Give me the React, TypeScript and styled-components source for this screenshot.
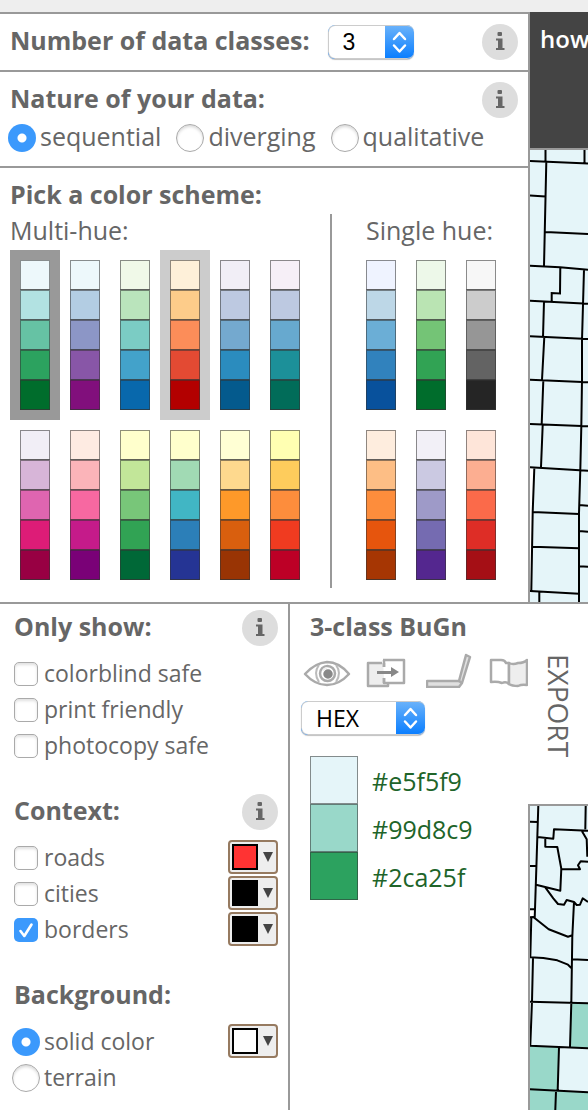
import React, { useState } from "react";
import styled, { createGlobalStyle } from "styled-components";

const GlobalStyle = createGlobalStyle`
  *, *::before, *::after { box-sizing: border-box; }
  body {
    margin: 0;
    background: #fff;
    color: #666;
    font-family: "Open Sans", "Noto Sans", sans-serif;
    font-size: 25px;
    line-height: 32px;
  }
  button, select, input { font: inherit; color: inherit; margin: 0; }
`;

const RULE = "2px solid #999";

const Page = styled.div`
  display: flex;
  flex-direction: column;
  min-height: 100vh;
  overflow: hidden;
`;

const TopStrip = styled.header`
  height: 12px;
  background: #eee;
`;

const Upper = styled.div`
  display: grid;
  grid-template-columns: 528px minmax(0, 1fr);
`;

const Setup = styled.main`
  display: flex;
  flex-direction: column;
`;

const SetupRow = styled.section<{ $bottom: number }>`
  border-top: ${RULE};
  padding: 10px 10px ${(p) => p.$bottom}px;
`;

const TitleBar = styled.div<{ $indent?: number }>`
  display: flex;
  align-items: flex-start;
  min-height: 36px;
  padding-left: ${(p) => p.$indent ?? 0}px;
`;

const Title = styled.h2`
  margin: 0;
  font-size: 25px;
  font-weight: 700;
  line-height: 32px;
  white-space: nowrap;
`;

const InfoButton = styled.button`
  width: 36px;
  height: 36px;
  margin-left: auto;
  padding: 0;
  border: 0;
  border-radius: 50%;
  background: #ddd;
  flex: none;
  svg { display: block; }
`;

const SelectBox = styled.div<{ $width: number }>`
  display: grid;
  grid-template-columns: minmax(0, 1fr) 29px;
  width: ${(p) => p.$width}px;
  height: 34px;
  border-radius: 7px;
  overflow: hidden;
  background: linear-gradient(#6cb3fa, #087dff);
  box-shadow: 0 1px 1px rgba(0, 0, 0, 0.25);
  > * { grid-row: 1; }
  > svg { grid-column: 2; pointer-events: none; z-index: 1; }
`;

const Select = styled.select<{ $family?: string }>`
  grid-column: 1 / 3;
  appearance: none;
  height: 34px;
  padding: 0 0 0 14px;
  border: 1px solid #ccc;
  border-right: 0;
  border-radius: 7px;
  background: linear-gradient(#fff, #fff) 0 0 / calc(100% - 29px) 100% no-repeat;
  color: #000;
  font-family: ${(p) => p.$family ?? "inherit"};
  font-size: 23px;
  line-height: 30px;
`;

const ClassesField = styled.div`
  margin: 1px 0 0 18px;
`;

const RadioRow = styled.div`
  display: flex;
  gap: 15px;
  margin: 6px 0 0 -2px;
`;

const OptionLabel = styled.label`
  display: flex;
  align-items: flex-start;
  line-height: 24px;
  white-space: nowrap;
`;

const Radio = styled.input`
  appearance: none;
  flex: none;
  width: 28px;
  height: 28px;
  margin-right: 4px;
  border: 1px solid #aaa;
  border-radius: 50%;
  background: #fff;
  box-shadow: inset 0 2px 3px rgba(0, 0, 0, 0.15);
  &:checked {
    border: 0;
    background: radial-gradient(circle, #fff 0 4px, #3b99fc 5px);
    box-shadow: none;
  }
`;

const Checkbox = styled.input`
  appearance: none;
  flex: none;
  width: 24px;
  height: 24px;
  margin: 2px 6px 0 2px;
  border: 1px solid #aaa;
  border-radius: 5px;
  background: #fff;
  box-shadow: inset 0 2px 3px rgba(0, 0, 0, 0.12);
  &:checked {
    border: 0;
    background: #3b99fc;
    box-shadow: none;
  }
`;

const CheckWrap = styled.span`
  display: grid;
  > * { grid-area: 1 / 1; }
  > svg { margin: 2px 0 0 2px; pointer-events: none; z-index: 1; }
`;

const Schemes = styled.div`
  display: flex;
`;

const HueGroup = styled.section<{ $inset?: boolean }>`
  width: ${(p) => (p.$inset ? "auto" : "320px")};
  padding-left: ${(p) => (p.$inset ? 24 : 0)}px;
`;

const HueLabel = styled.h3<{ $indent: number }>`
  margin: 0 0 4px;
  padding-left: ${(p) => p.$indent}px;
  font-size: 25px;
  font-weight: 400;
  line-height: 32px;
`;

const Divider = styled.div`
  width: 2px;
  margin-bottom: 2px;
  background: #999;
`;

const RampGrid = styled.div<{ $columns: number }>`
  display: grid;
  grid-template-columns: repeat(${(p) => p.$columns}, 50px);
`;

const RampButton = styled.button<{ $state?: string }>`
  display: block;
  padding: 10px;
  border: 0;
  background: ${(p) =>
    p.$state === "selected" ? "#999" : p.$state === "hover" ? "#ccc" : "transparent"};
`;

const RampCell = styled.span<{ $color: string }>`
  display: block;
  width: 30px;
  height: 30px;
  background: ${(p) => p.$color};
  box-shadow: inset 0 -1px rgba(51, 51, 51, 0.5), inset 0 0 0 1px rgba(51, 51, 51, 0.55);
`;

const Side = styled.aside`
  display: flex;
  flex-direction: column;
  border-left: ${RULE};
  overflow: hidden;
`;

const HelpBar = styled.nav`
  height: 138px;
  padding: 10px;
  border-bottom: ${RULE};
  background: #444;
`;

const HelpLink = styled.a`
  color: #fff;
  font-size: 24px;
  font-weight: 600;
  line-height: 32px;
  text-decoration: none;
`;

const MapView = styled.div`
  display: flex;
  flex: 1 1 0;
  min-height: 0;
  background: #e5f5f9;
  overflow: hidden;
  svg { display: block; width: 100%; height: 100%; }
`;

const Lower = styled.div`
  display: grid;
  grid-template-columns: 290px 238px minmax(0, 1fr);
  flex: 1;
  border-top: ${RULE};
`;

const Filters = styled.div`
  display: flex;
  flex-direction: column;
  gap: 32px;
  padding: 6px 10px 16px 12px;
  border-right: ${RULE};
`;

const OptionList = styled.div`
  display: flex;
  flex-direction: column;
  gap: 2px;
  margin-top: 10px;
`;

const OptionRow = styled.div`
  display: flex;
  align-items: flex-start;
  justify-content: space-between;
  height: 34px;
  > label {
    padding-top: 4px;
    font-size: 23px;
    line-height: 26px;
  }
`;

const PickerButton = styled.button`
  display: flex;
  align-items: center;
  width: 50px;
  height: 34px;
  padding: 2px;
  border: 2px solid #967a60;
  border-radius: 4px;
  background: #eee;
`;

const PickerSwatch = styled.span<{ $color: string }>`
  width: 26px;
  height: 26px;
  margin-right: 5px;
  border: 2px solid #000;
  background: ${(p) => p.$color};
`;

const Detail = styled.section`
  padding: 6px 0 20px 11px;
  overflow: hidden;
`;

const Traits = styled.div`
  display: flex;
  margin: 2px 0 13px 2px;
  svg { display: block; flex: none; }
`;

const ColorList = styled.ul`
  margin: 21px 0 0 9px;
  padding: 0;
  list-style: none;
`;

const ColorItem = styled.li`
  display: flex;
  height: 48px;
  color: #206429;
  line-height: 50px;
`;

const ColorSwatch = styled.span<{ $color: string }>`
  width: 48px;
  height: 48px;
  margin-right: 14px;
  background: ${(p) => p.$color};
  box-shadow: inset 0 0 0 1px rgba(51, 51, 51, 0.55);
`;

const Output = styled.div`
  display: flex;
  flex-direction: column;
`;

const ExportButton = styled.button`
  display: flex;
  flex-direction: column;
  align-items: flex-start;
  justify-content: flex-end;
  height: 200px;
  padding: 50px 0 0 12px;
  border: 0;
  background: #fff;
  font-size: 28px;
  line-height: 38px;
  writing-mode: vertical-rl;
`;

const LowerMap = styled(MapView)`
  border-top: ${RULE};
  border-left: ${RULE};
`;

function Info({ topic }: { topic: string }) {
  return (
    <InfoButton type="button" aria-label={topic}>
      <svg width="36" height="36" viewBox="0 0 36 36" fill="#666">
        <rect x="15.5" y="8" width="4.5" height="4" rx="1" />
        <path d="M14 14.500H20.500V24H22.500V26H14V24H16V16.500H14Z" />
      </svg>
    </InfoButton>
  );
}

const UpDown = () => (
  <svg width="29" height="34" viewBox="0 0 29 34" fill="none" stroke="#fff" strokeWidth="2.5" strokeLinecap="round" strokeLinejoin="round">
    <path d="M9 14l5.5-6 5.5 6M9 20.5l5.5 6 5.5-6" />
  </svg>
);

function Picker({ color, name }: { color: string; name: string }) {
  return (
    <PickerButton type="button" aria-label={name}>
      <PickerSwatch $color={color} />
      <svg width="10" height="10" viewBox="0 0 10 10">
        <path d="M0 0h10L5 10z" fill="#444" />
      </svg>
    </PickerButton>
  );
}

function Check({ label, initial = false }: { label: string; initial?: boolean }) {
  const [on, setOn] = useState(initial);
  return (
    <OptionLabel>
      <CheckWrap>
        <Checkbox type="checkbox" checked={on} onChange={() => setOn(!on)} />
        {on && (
          <svg width="24" height="24" viewBox="0 0 24 24" fill="none" stroke="#fff" strokeWidth="2.6" strokeLinecap="round" strokeLinejoin="round">
            <path d="M6.5 13l3.8 5L17.500 6.500" />
          </svg>
        )}
      </CheckWrap>
      {label}
    </OptionLabel>
  );
}

const MULTI_HUE: [string, string][] = [
  ["BuGn", "#edf8fb #b2e2e2 #66c2a4 #2ca25f #006d2c"],
  ["BuPu", "#edf8fb #b3cde3 #8c96c6 #8856a7 #810f7c"],
  ["GnBu", "#f0f9e8 #bae4bc #7bccc4 #43a2ca #0868ac"],
  ["OrRd", "#fef0d9 #fdcc8a #fc8d59 #e34a33 #b30000"],
  ["PuBu", "#f1eef6 #bdc9e1 #74a9cf #2b8cbe #045a8d"],
  ["PuBuGn", "#f6eff7 #bdc9e1 #67a9cf #1c9099 #016c59"],
  ["PuRd", "#f1eef6 #d7b5d8 #df65b0 #dd1c77 #980043"],
  ["RdPu", "#feebe2 #fbb4b9 #f768a1 #c51b8a #7a0177"],
  ["YlGn", "#ffffcc #c2e699 #78c679 #31a354 #006837"],
  ["YlGnBu", "#ffffcc #a1dab4 #41b6c4 #2c7fb8 #253494"],
  ["YlOrBr", "#ffffd4 #fed98e #fe9929 #d95f0e #993404"],
  ["YlOrRd", "#ffffb2 #fecc5c #fd8d3c #f03b20 #bd0026"],
];

const SINGLE_HUE: [string, string][] = [
  ["Blues", "#eff3ff #bdd7e7 #6baed6 #3182bd #08519c"],
  ["Greens", "#edf8e9 #bae4b3 #74c476 #31a354 #006d2c"],
  ["Greys", "#f7f7f7 #cccccc #969696 #636363 #252525"],
  ["Oranges", "#feedde #fdbe85 #fd8d3c #e6550d #a63603"],
  ["Purples", "#f2f0f7 #cbc9e2 #9e9ac8 #756bb1 #54278f"],
  ["Reds", "#fee5d9 #fcae91 #fb6a4a #de2d26 #a50f15"],
];

const STATES: Record<string, string> = { BuGn: "selected", OrRd: "hover" };

function Ramps({ ramps, columns }: { ramps: [string, string][]; columns: number }) {
  return (
    <RampGrid $columns={columns}>
      {ramps.map(([name, colors]) => (
        <RampButton key={name} type="button" aria-label={name} $state={STATES[name]}>
          {colors.split(" ").map((c) => (
            <RampCell key={c} $color={c} />
          ))}
        </RampButton>
      ))}
    </RampGrid>
  );
}

const UPPER_LINES = [
  "M0 11L58 13.500M15.500 0V12M54.500 0V13M16.300 12L14 116M0 45.500L15.500 46.500M15.500 82L58 84",
  "M0 115.700L30 117.300L58 119.700M30.300 117L30 143.500L21.700 143V151M0 150.700L58 153.700",
  "M54 119.500L52 190V230L51.300 277L50.300 320L49 363V452M14 151.500L13 187M0 186.300L58 189",
  "M14.300 187L12 230M0 229.700L58 232.300M13.300 231L11.700 274M0 274L58 276.300M12.700 275L11 317",
  "M0 317.300L58 320.700M4.300 318.700L2.700 362L1.300 441M2.700 362L49 364M2.500 396.700L49 398.300",
  "M0 441L49 443.700M9.300 442V452M49 355L58 355.700M49 381L58 381.700M49 416.300L58 416.700",
].join("");

const LOWER_LINES = [
  "M8.300 0L6.700 51L4.700 112M0 15.700L7.700 16M55.700 0L55.300 23.300M0 60H6.700M0 103.300H4.700",
  "M7.700 31L23.300 32.700L24 23.300L58 24.700M15.300 32.300V40.700L27.300 41L31.300 62.700L30.300 84.700L6 78.700",
  "M31.300 63L50 63.300L48 59.300L50.700 55.300L58 55.700M52 25.300L56.700 33.300L57.300 50.700",
  "M15.300 81.300L23.300 92.300L28 98L34 98.700L36.700 94L44 96L46.700 99L50 98.700L52.700 92.300L58 96",
  "M0 111.300L3.300 111L18.700 123.300L38 130.700L42.300 129.300M44 96L42.300 130.700L41.300 197.300L40 241",
  "M42.300 153.300L58 154M1.300 112L0.300 151M0 151.300L13.300 152L27.300 154.300L38 158.700L41.300 162",
  "M3 152L2 195.300L0.300 239.300M0 195.700L58 197.300M0 239.700L58 242.300M29 241.300L27.700 284",
  "M0 283.300L58 286.300M26 285.300L25.300 304",
].join("");

const TraitIcons = () => (
  <Traits>
    <svg width="63" height="40" viewBox="0 0 63 40" fill="none" stroke="#aaa" strokeWidth="2.500" strokeLinejoin="round">
      <path d="M2 26Q12 15 24 14Q36 14 46 26Q36 37 24 37Q12 37 2 26Z" />
      <path d="M16 17Q10 25 16 34M33 17Q39 25 33 34" stroke="#bbb" strokeWidth="2" />
      <circle cx="24.500" cy="25.500" r="7.500" />
      <circle cx="25" cy="26" r="3.500" fill="#888" stroke="#888" />
      <path d="M20 23q1-3 4-3" stroke="#eee" strokeWidth="2" />
    </svg>
    <svg width="60" height="40" viewBox="0 0 60 40" strokeLinejoin="round">
      <path d="M2 15H17V11H38V35H21V38H2Z" fill="#eee" stroke="none" />
      <path d="M17 12H38V35H18V30M18 19V12" fill="#fff" stroke="#aaa" strokeWidth="2.500" />
      <path d="M16 15H2V38H22V35M18 15V19M18 30V35" fill="none" stroke="#aaa" strokeWidth="2.500" />
      <path d="M11 23H25V19L33 24L25 29V26H11Z" fill="#888" />
    </svg>
    <svg width="62" height="40" viewBox="0 0 62 40" fill="#e0e0e0" stroke="#aaa" strokeWidth="2.500" strokeLinejoin="round">
      <path d="M1 33H33L40 7L44 9L36 35L33 39H1Z" />
      <path d="M33 33L36 35" />
    </svg>
    <svg width="42" height="40" viewBox="0 0 42 40" stroke="#aaa" strokeWidth="2.500" strokeLinejoin="round">
      <path d="M3 12H13Q17 12 18 15H21V36Q18 33 14 35Q9 33 3 34Z" fill="#fff" />
      <path d="M21 15Q25 17 30 15Q36 15 39 12V37Q34 36 30 38Q24 38 21 36Z" fill="#eee" />
    </svg>
  </Traits>
);

const COLORS = ["#e5f5f9", "#99d8c9", "#2ca25f"];
const NATURES = ["sequential", "diverging", "qualitative"];

export default function App() {
  const [nature, setNature] = useState("sequential");
  const [background, setBackground] = useState("solid color");
  return (
    <>
      <GlobalStyle />
      <Page>
        <TopStrip />
        <Upper>
          <Setup>
            <SetupRow $bottom={10}>
              <TitleBar>
                <Title as="label" htmlFor="classes">Number of data classes:</Title>
                <ClassesField>
                  <SelectBox $width={86}>
                    <Select id="classes" defaultValue="3" $family={'"Liberation Sans", sans-serif'}>
                      <option>3</option>
                    </Select>
                    <UpDown />
                  </SelectBox>
                </ClassesField>
                <Info topic="About data classes" />
              </TitleBar>
            </SetupRow>
            <SetupRow $bottom={14}>
              <TitleBar>
                <Title>Nature of your data:</Title>
                <Info topic="About the nature of data" />
              </TitleBar>
              <RadioRow>
                {NATURES.map((n) => (
                  <OptionLabel key={n}>
                    <Radio type="radio" name="nature" checked={nature === n} onChange={() => setNature(n)} />
                    {n}
                  </OptionLabel>
                ))}
              </RadioRow>
            </SetupRow>
            <SetupRow $bottom={12}>
              <TitleBar>
                <Title>Pick a color scheme:</Title>
              </TitleBar>
              <Schemes>
                <HueGroup>
                  <HueLabel $indent={0}>Multi-hue:</HueLabel>
                  <Ramps ramps={MULTI_HUE} columns={6} />
                </HueGroup>
                <Divider />
                <HueGroup $inset>
                  <HueLabel $indent={10}>Single hue:</HueLabel>
                  <Ramps ramps={SINGLE_HUE} columns={3} />
                </HueGroup>
              </Schemes>
            </SetupRow>
          </Setup>
          <Side>
            <HelpBar>
              <HelpLink href="#how">how</HelpLink>
            </HelpBar>
            <MapView>
              <svg viewBox="0 0 58 452" preserveAspectRatio="xMinYMin slice" role="img" aria-label="County map">
                <path d="M0 318L4.300 318.700L2.700 362L1.300 441H0Z" fill="#fff" />
                <path d={UPPER_LINES} fill="none" stroke="#000" strokeWidth="2" />
              </svg>
            </MapView>
          </Side>
        </Upper>
        <Lower>
          <Filters>
            <section>
              <TitleBar $indent={2}>
                <Title>Only show:</Title>
                <Info topic="About filters" />
              </TitleBar>
              <OptionList>
                {["colorblind safe", "print friendly", "photocopy safe"].map((t) => (
                  <OptionRow key={t}>
                    <Check label={t} />
                  </OptionRow>
                ))}
              </OptionList>
            </section>
            <section>
              <TitleBar $indent={2}>
                <Title>Context:</Title>
                <Info topic="About context" />
              </TitleBar>
              <OptionList>
                <OptionRow>
                  <Check label="roads" />
                  <Picker color="#ff3333" name="Road color" />
                </OptionRow>
                <OptionRow>
                  <Check label="cities" />
                  <Picker color="#000" name="City color" />
                </OptionRow>
                <OptionRow>
                  <Check label="borders" initial />
                  <Picker color="#000" name="Border color" />
                </OptionRow>
              </OptionList>
            </section>
            <section>
              <TitleBar $indent={2}>
                <Title>Background:</Title>
              </TitleBar>
              <OptionList>
                {["solid color", "terrain"].map((b) => (
                  <OptionRow key={b}>
                    <OptionLabel>
                      <Radio type="radio" name="background" checked={background === b} onChange={() => setBackground(b)} />
                      {b}
                    </OptionLabel>
                    {b === "solid color" && <Picker color="#fff" name="Background color" />}
                  </OptionRow>
                ))}
              </OptionList>
            </section>
          </Filters>
          <Detail>
            <TitleBar $indent={9}>
              <Title>3-class BuGn</Title>
            </TitleBar>
            <TraitIcons />
            <SelectBox $width={124}>
              <Select aria-label="Color format" defaultValue="HEX">
                <option>HEX</option>
              </Select>
              <UpDown />
            </SelectBox>
            <ColorList>
              {COLORS.map((c) => (
                <ColorItem key={c}>
                  <ColorSwatch $color={c} />
                  {c}
                </ColorItem>
              ))}
            </ColorList>
          </Detail>
          <Output>
            <ExportButton type="button">EXPORT</ExportButton>
            <LowerMap>
              <svg viewBox="0 0 58 304" preserveAspectRatio="xMinYMin slice" role="img" aria-label="County map detail">
                <path d="M41.300 197H58V242L40 241ZM0 240L29 241L27.700 284L0 283ZM0 283L58 286V304H0Z" fill="#99d8c9" />
                <path d="M0 104H4.300L3.500 110L0 111Z" fill="#fff" />
                <path d={LOWER_LINES} fill="none" stroke="#000" strokeWidth="2" strokeLinejoin="round" />
              </svg>
            </LowerMap>
          </Output>
        </Lower>
      </Page>
    </>
  );
}
